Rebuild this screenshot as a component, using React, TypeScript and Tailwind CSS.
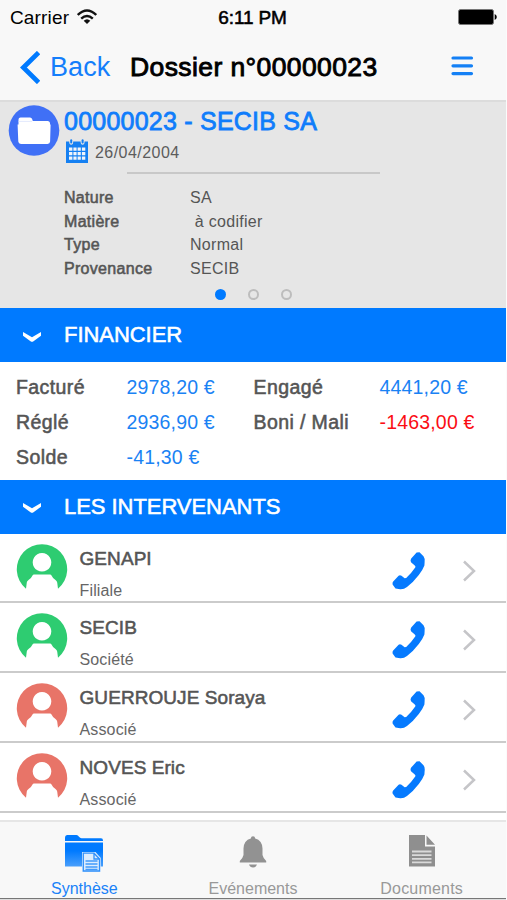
import type { ReactNode } from "react";

const MEDIUM = "[-webkit-text-stroke:0.55px_currentColor]";

function PhoneIcon() {
  return (
    <svg className="h-[38px] w-[34px] shrink-0" viewBox="0 0 34 38" fill="#067afe">
      <path d="M24.6 0.6 L27.5 0.3 L31.5 4.2 Q33.2 6.2 32.6 10.5 L32.4 13.5 Q30.5 18.5 26.8 23 Q21.5 30 15 35 Q12 37.5 8.2 37.3 L3.5 36.5 L0.6 32.4 Q0.2 30.8 1.2 29.6 L6.6 23.7 Q8 22.7 9.5 23.8 L12.6 26.2 L14.2 26 Q19.6 21 23.4 15.3 L23.3 14.1 L19 10.2 Q18 8.2 19.2 6.6 Z" />
    </svg>
  );
}

function Avatar({ color }: { color: string }) {
  return (
    <svg className="h-[52px] w-[52px] shrink-0" viewBox="0 0 52 52">
      <path
        fill={color}
        fillRule="evenodd"
        d="M10 44.8 A25.2 25.2 0 1 1 42 44.8 L41.2 38.5 Q41 37 39.5 36 Q36.5 34 35.5 31.5 Q35 30.6 34 30.6 L18 30.6 Q17 30.6 16.5 31.5 Q15.5 34 12.5 36 Q10.9 37 10.8 38.5 Z M26 9 a9.3 9.3 0 1 0 0.01 0 Z"
      />
    </svg>
  );
}

function Section({ title }: { title: string }) {
  return (
    <div className="flex h-[54px] shrink-0 items-center bg-[#007aff] pl-[22px] text-white">
      <svg className="mt-[3px] h-3 w-5" viewBox="0 0 20 12" fill="#fff">
        <path d="M1 1 L10 6.3 L19 1 V4.8 L11.5 10.2 Q10 11.2 8.5 10.2 L1 4.8 Z" />
      </svg>
      <span className={`ml-[22px] text-[22px] leading-[54px] tracking-[-0.05px] ${MEDIUM}`}>{title}</span>
    </div>
  );
}

function Detail({ label, children }: { label: string; children: ReactNode }) {
  return (
    <div className="flex h-[23.75px] items-center pl-16 text-[16px] tracking-[0.3px]">
      <span className={`w-[126px] ${MEDIUM}`}>{label}</span>
      <span className="whitespace-pre">{children}</span>
    </div>
  );
}

function Amount({ label, value, negative }: { label: string; value: string; negative?: boolean }) {
  return (
    <>
      <span className={`tracking-[0.4px] ${MEDIUM}`}>{label}</span>
      <span className={`tracking-[0.18px] ${negative ? "text-[#fb0d14]" : "text-[#1a82f4]"}`}>{value}</span>
    </>
  );
}

const people = [
  { name: "GENAPI", role: "Filiale", color: "#2ecc71" },
  { name: "SECIB", role: "Société", color: "#2ecc71" },
  { name: "GUERROUJE Soraya", role: "Associé", color: "#e87468" },
  { name: "NOVES Eric", role: "Associé", color: "#e87468" },
];

export default function App() {
  return (
    <div className="h-[900px] w-[507px] overflow-hidden bg-[#fbfbfb] font-['Liberation_Sans',Arial,sans-serif] text-[#555]">
      <div className="flex h-[900px] w-[506px] flex-col bg-white">
        <header className="h-[102px] shrink-0 border-b-2 border-[#dcdcdc] bg-[#f8f8f8] text-black">
          <div className="grid h-[36px] grid-cols-[1fr_auto_1fr] items-center pl-[10px] pr-[9px] text-[19px]">
            <div className="flex items-center">
              <span className="tracking-[0.15px]">Carrier</span>
              <svg className="mb-[2px] ml-2 h-4 w-5" viewBox="0 0 20 16" fill="none" stroke="#111" strokeWidth="2.4">
                <path d="M0.8 6 Q10 -2.8 19.2 6" />
                <path d="M4.2 9.7 Q10 4.2 15.8 9.7" />
                <path d="M6.7 11.8 Q10 8.8 13.3 11.8 L10 15 Z" fill="#111" stroke="none" />
              </svg>
            </div>
            <span className={`mr-[2px] tracking-[-0.15px] ${MEDIUM}`}>6:11 PM</span>
            <svg className="mb-[2px] h-4 w-[39px] justify-self-end" viewBox="0 0 39 16">
              <rect x="0.5" y="0.5" width="35" height="15" rx="2" fill="#000" stroke="#777" />
              <path d="M36.7 5 Q38.8 6 38.8 8 Q38.8 10 36.7 11 Z" />
            </svg>
          </div>
          <div className="flex h-[63px] items-center pl-5 text-[26px]">
            <svg className="h-[33px] w-5" viewBox="0 0 20 33" fill="none" stroke="#007aff" strokeWidth="4.8">
              <path d="M18.6 1.6 L3.4 16.5 L18.6 31.4" />
            </svg>
            <span className="ml-[10px] w-20 text-[27px] tracking-[0.1px] text-[#147efb]">Back</span>
            <span className="w-[320px] text-[26.5px] tracking-[0.4px] [-webkit-text-stroke:0.9px_currentColor]">Dossier n°00000023</span>
            <svg className="mb-1 ml-px h-5 w-[23px]" viewBox="0 0 23 20" stroke="#1480f5" strokeWidth="3.2" strokeLinecap="round">
              <path d="M2 2H20.5M2 9.8H20.5M2 17.6H20.5" />
            </svg>
          </div>
        </header>

        <section className="h-[206px] shrink-0 bg-[#e6e6e6]">
          <div className="flex h-[70px] pl-2 pt-[3px]">
            <svg className="h-[52px] w-[52px]" viewBox="0 0 52 52">
              <circle cx="26" cy="25.5" r="25.3" fill="#4070f6" />
              <path
                fill="#fff"
                d="M10.5 14.5 Q10.5 12.5 12.5 12.5 H22 Q23.7 12.5 24.2 14.3 L24.8 16 H39.5 Q42 16 42 18.5 V19.6 H42.6 L42.1 36.5 Q42 38.9 39.5 38.9 H13 Q10.4 38.9 10.3 36.5 L9.6 19.6 H10.5 Z"
              />
              <path d="M10.5 16.4 H24" stroke="#d5dffc" strokeWidth="0.7" />
            </svg>
            <div className="ml-1 flex flex-col">
              <h1 className="h-[33px] text-[25px] leading-[33px] tracking-[0.23px] text-[#107dfb] [-webkit-text-stroke:0.8px_currentColor]">
                00000023 - SECIB SA
              </h1>
              <div className="flex h-[30px] items-center text-[16px] text-[#5c5c5c]">
                <svg className="mb-[5px] ml-[2px] h-6 w-[22px]" viewBox="0 0 22 24" fill="#1580f2">
                  <path d="M0 2.5 H3.2 Q3.2 5.8 5.2 5.8 Q7.2 5.8 7.2 2.5 H14.6 Q14.6 5.8 16.6 5.8 Q18.6 5.8 18.6 2.5 H22 V24 H0 Z" />
                  <rect x="4.2" y="0.3" width="2" height="4.2" rx="1" />
                  <rect x="15.6" y="0.3" width="2" height="4.2" rx="1" />
                  <path
                    fill="#f1f5fa"
                    d="M3 8.5h3.4v3.2H3zM7.4 8.5h3.2v3.2h-3.2zM11.6 8.5h3.2v3.2h-3.2zM15.9 8.5h3.4v3.2h-3.4zM3 13h3.4v3.2H3zM7.4 13h3.2v3.2h-3.2zM11.6 13h3.2v3.2h-3.2zM15.9 13h3.4v3.2h-3.4zM3 17.5h3.4v3.2H3zM7.4 17.5h3.2v3.2h-3.2zM11.6 17.5h3.2v3.2h-3.2zM15.9 17.5h3.4v3.2h-3.4z"
                  />
                </svg>
                <span className="ml-[7px] tracking-[0.45px]">26/04/2004</span>
              </div>
            </div>
          </div>
          <div className="ml-[127px] h-[2px] w-[253px] bg-[#c8c8c8]" />
          <div className="pt-[12px]">
            <Detail label="Nature">SA</Detail>
            <Detail label="Matière">{" à codifier"}</Detail>
            <Detail label="Type">Normal</Detail>
            <Detail label="Provenance">SECIB</Detail>
          </div>
          <div className="mt-[8px] flex justify-center gap-[22px] pl-[1px]">
            <i className="h-[11px] w-[11px] rounded-full bg-[#007aff]" />
            <i className="h-[11px] w-[11px] rounded-full border-2 border-[#bdbdbd]" />
            <i className="h-[11px] w-[11px] rounded-full border-2 border-[#bdbdbd]" />
          </div>
        </section>

        <Section title="FINANCIER" />
        <div className="grid h-[117.5px] shrink-0 auto-rows-[35px] grid-cols-[110.5px_127px_126px_1fr] items-center pl-4 pt-[8px] text-[19.5px]">
          <Amount label="Facturé" value="2978,20 €" />
          <Amount label="Engagé" value="4441,20 €" />
          <Amount label="Réglé" value="2936,90 €" />
          <Amount label="Boni / Mali" value="-1463,00 €" negative />
          <Amount label="Solde" value="-41,30 €" />
        </div>

        <Section title="LES INTERVENANTS" />
        {people.map((p) => (
          <div key={p.name} className="flex h-[69.8px] shrink-0 border-b-2 border-[#cbcbcb] pl-4">
            <div className="pt-[10px]"><Avatar color={p.color} /></div>
            <div className="ml-[11.5px] w-[312px] pt-[12px]">
              <div className={`h-[26px] text-[19px] leading-[26px] tracking-[0.07px] ${MEDIUM}`}>{p.name}</div>
              <div className="mt-[9px] h-5 text-[16px] leading-5 tracking-[0.15px] text-[#666]">{p.role}</div>
            </div>
            <div className="pt-[18px]"><PhoneIcon /></div>
            <svg className="ml-[37px] mt-[26px] h-[22px] w-[13px]" viewBox="0 0 13 22" fill="none" stroke="#c5c5c8" strokeWidth="2.5">
              <path d="M1 1.5 L11 11 L1 20.5" />
            </svg>
          </div>
        ))}

        <nav className="mt-auto grid h-[78px] shrink-0 grid-cols-3 border-t-2 border-[#e6e6e6] bg-[#f8f8f8] text-[16px] text-[#999]">
          <div className="flex flex-col items-center pt-[12px] text-[#1a82f8]">
            <svg className="h-[39px] w-10 shrink-0" viewBox="0 0 40 39">
              <defs>
                <linearGradient id="folder" x1="0" y1="0" x2="0" y2="1">
                  <stop offset="0.5" stopColor="#007aff" />
                  <stop offset="1" stopColor="#4a9ffb" />
                </linearGradient>
              </defs>
              <path fill="url(#folder)" d="M1 7 V4 Q1 1 3.5 1 H12.5 Q14 1 15 2.8 Q16 4.2 17.5 4.2 H37 Q39 4.2 39 6.5 V7 Z M1 8.5 H39 V32.6 H1 Z" />
              <path fill="#dcecfd" d="M18 18 H31.5 L36.8 24 V38 H18 Z" />
              <path fill="none" stroke="#3090fa" strokeWidth="1.3" d="M19.3 19.2 H30 V25 H35.5 V37 H19.3 Z M30 19.2 L35.5 25" />
              <path stroke="#429afb" strokeWidth="1.4" d="M21.5 27H33.5M21.5 30H33.5M21.5 33H33.5M21.5 35.5H33.5" />
            </svg>
            <span className="leading-[31px]">Synthèse</span>
          </div>
          <div className="flex flex-col items-center pt-[12px]">
            <svg className="h-[39px] w-10 shrink-0" viewBox="0 0 40 39" fill="#929292">
              <path d="M20 2.2 Q22 2.2 22.2 4.4 Q29.3 6.3 29.5 14.5 V21 Q30.3 24.5 33.2 27 V28.5 H6.8 V27 Q9.7 24.5 10.5 21 V14.5 Q10.7 6.3 17.8 4.4 Q18 2.2 20 2.2 Z" />
              <path d="M16 30.5 H24 Q23 33.5 20 33.5 Q17 33.5 16 30.5Z" />
            </svg>
            <span className="leading-[31px]">Evénements</span>
          </div>
          <div className="flex flex-col items-center pt-[12px]">
            <svg className="h-[39px] w-10 shrink-0" viewBox="0 0 40 39" fill="#8f8f8f">
              <path d="M7 1 H23 V12.5 H33 V32.6 H7 Z M24.5 1.5 L33 10.7 H24.5 Z" />
              <path stroke="#dadada" strokeWidth="1.8" d="M10 17.5H29.5M10 21.2H29.5M10 24.9H29.5M10 28.4H29.5" />
            </svg>
            <span className="leading-[31px] tracking-[0.2px]">Documents</span>
          </div>
        </nav>
        <div className="h-[2px] shrink-0 border-t border-[#777] bg-[#ddd]" />
      </div>
    </div>
  );
}
